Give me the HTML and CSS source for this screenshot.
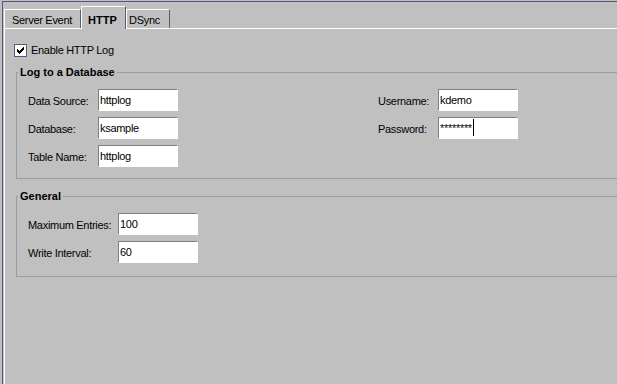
FILE: index.html
```html
<!DOCTYPE html>
<html lang="en">
<head>
  <meta charset="UTF-8">
  <title>HTTP Settings</title>
  <link rel="stylesheet" href="styles.css">
</head>
<body>

  <div class="frame">
    <div class="tabs">
      <div class="tab tab-server">Server Event</div>
      <div class="tab tab-http active">HTTP</div>
      <div class="tab tab-dsync">DSync</div>
    </div>

    <div class="panel">
      <label class="check">
        <span class="box">
          <svg width="7" height="7" viewBox="0 0 7 7" shape-rendering="crispEdges">
            <rect x="6" y="0" width="1" height="1"/>
            <rect x="5" y="1" width="2" height="1"/>
            <rect x="0" y="2" width="1" height="1"/>
            <rect x="4" y="2" width="3" height="1"/>
            <rect x="0" y="3" width="2" height="1"/>
            <rect x="3" y="3" width="3" height="1"/>
            <rect x="0" y="4" width="5" height="1"/>
            <rect x="1" y="5" width="3" height="1"/>
            <rect x="2" y="6" width="1" height="1"/>
          </svg>
        </span>
        Enable HTTP Log
      </label>

      <fieldset class="group group-db">
        <legend>Log to a Database</legend>
        <div class="columns">
          <div class="fields fields-db">
            <span class="lbl">Data Source:</span><span class="field">httplog</span>
            <span class="lbl">Database:</span><span class="field">ksample</span>
            <span class="lbl">Table Name:</span><span class="field">httplog</span>
          </div>
          <div class="fields fields-login">
            <span class="lbl">Username:</span><span class="field">kdemo</span>
            <span class="lbl">Password:</span><span class="field">********<span class="caret"></span></span>
          </div>
        </div>
      </fieldset>

      <fieldset class="group group-general">
        <legend>General</legend>
        <div class="fields fields-general">
          <span class="lbl">Maximum Entries:</span><span class="field">100</span>
          <span class="lbl">Write Interval:</span><span class="field">60</span>
        </div>
      </fieldset>
    </div>
  </div>

</body>
</html>
```

FILE: styles.css
```css
body {
  margin: 0;
  height: 384px;
  overflow: hidden;
  background: #c0c0c0;
  font-family: "Liberation Sans", Arial, sans-serif;
  font-size: 11px;
  line-height: 13px;
  letter-spacing: -0.3px;
  color: #000;
}

/* outer window edge */
.frame {
  box-sizing: border-box;
  display: flex;
  flex-direction: column;
  margin: 1px 0 0 2px;
  height: 383px;
  border-top: 1px solid #58587c;
  border-left: 1px solid #58587c;
}

/* tab strip */
.tabs {
  display: flex;
  align-items: flex-end;
  height: 26px;
  padding-left: 1px;
}

.tab {
  box-sizing: border-box;
  height: 19px;
  padding: 4px 0 0 7px;
  border-top: 1px solid #fff;
  border-left: 1px solid #fff;
  border-right: 1px solid #58587c;
  white-space: nowrap;
}

.tab-server { width: 77px; }
.tab-dsync { width: 44px; padding-left: 2px; }

.tab-http {
  width: 45px;
  padding-left: 6px;
}

.tab.active {
  position: relative;
  z-index: 1;
  height: 23px;
  margin-bottom: -1px;
  padding-top: 7px;
  font-weight: bold;
  letter-spacing: 0;
  background: #c0c0c0;
}

/* tab body */
.panel {
  flex: 1;
  margin-left: 1px;
  padding-left: 11px;
  border-top: 1px solid #fff;
  border-left: 1px solid #fff;
}

.check {
  display: flex;
  align-items: center;
  gap: 4px;
  height: 13px;
  margin: 15px 0 0 -2px;
}

.check .box {
  box-sizing: border-box;
  width: 13px;
  height: 13px;
  display: flex;
  align-items: center;
  justify-content: center;
  background: #fff;
  border: 1px solid #58587c;
}

/* group boxes, open on the right where they run past the window */
.group {
  margin: 9px 0 0 0;
  padding: 10px 0 11px 11px;
  border: 1px solid #9b9ba3;
  border-right: 0;
  min-width: 0;
}

.group legend {
  margin-left: -10px;
  padding: 0 2px;
  font-weight: bold;
  letter-spacing: 0;
  line-height: 13px;
}

.group-general {
  margin-top: 11px;
  padding-bottom: 13px;
}

.columns {
  display: flex;
  gap: 200px;
}

.fields {
  display: grid;
  row-gap: 6px;
  grid-auto-rows: 22px;
}

.fields-db { grid-template-columns: 70px 80px; }
.fields-login { grid-template-columns: 60px 80px; }
.fields-general { grid-template-columns: 90px 80px; }

.lbl {
  padding-top: 1px;
  line-height: 22px;
  white-space: nowrap;
}

.field {
  box-sizing: border-box;
  height: 22px;
  padding-left: 1px;
  line-height: 20px;
  background: #fff;
  border-top: 1px solid #808080;
  border-left: 1px solid #808080;
  border-right: 1px solid #fff;
  border-bottom: 1px solid #fff;
  white-space: nowrap;
}

.caret {
  display: inline-block;
  width: 1px;
  height: 17px;
  margin: 1px 0 0 1px;
  vertical-align: top;
  background: #000;
}
```
